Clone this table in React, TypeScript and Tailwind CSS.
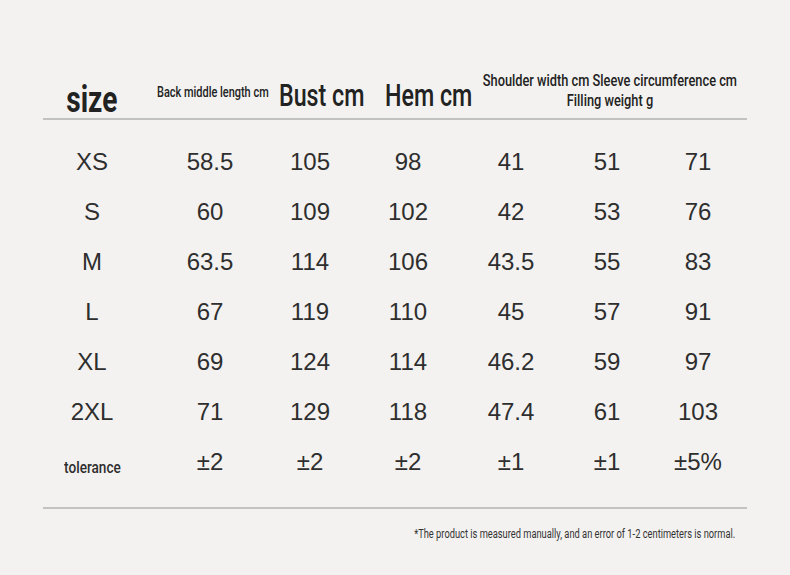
import React from "react";

const cond = { fontFamily: 'Roboto, "Liberation Sans", sans-serif' };
const num = { fontFamily: '"Liberation Sans", Arial, sans-serif' };

const rows = [
  ["XS", "58.5", "105", "98", "41", "51", "71"],
  ["S", "60", "109", "102", "42", "53", "76"],
  ["M", "63.5", "114", "106", "43.5", "55", "83"],
  ["L", "67", "119", "110", "45", "57", "91"],
  ["XL", "69", "124", "114", "46.2", "59", "97"],
  ["2XL", "71", "129", "118", "47.4", "61", "103"],
];
const tol = ["±2", "±2", "±2", "±1", "±1", "±5%"];

export default function App() {
  return (
    <div className="w-[790px] h-[575px] bg-[#f3f2f0] pt-[70px] pl-[43px] text-[#222]">
      <div className="w-[704px]">
        {/* header */}
        <div className="flex items-end h-[50px] border-b-2 border-[#c2c2c0] whitespace-nowrap" style={cond}>
          <div className="w-[98px] flex justify-center">
            <span className="inline-block text-[36px] font-bold leading-none scale-x-[0.78]">size</span>
          </div>
          <div className="w-[138px] pl-[16px] pb-[14px]">
            <span className="inline-block text-[15px] font-medium leading-none scale-x-[0.73] origin-left">Back middle length cm</span>
          </div>
          <div className="w-[106px] pb-[5px]">
            <span className="inline-block text-[31px] font-medium leading-none scale-x-[0.75] origin-left">Bust cm</span>
          </div>
          <div className="w-[96px] pb-[5px]">
            <span className="inline-block text-[31px] font-medium leading-none scale-x-[0.75] origin-left">Hem cm</span>
          </div>
          <div className="w-[258px] flex flex-col items-center text-[16px] font-medium leading-[20px] pb-[7px]">
            <span className="inline-block scale-x-[0.8]">Shoulder width cm Sleeve circumference cm</span>
            <span className="inline-block scale-x-[0.8]">Filling weight g</span>
          </div>
        </div>
        {/* body */}
        <div className="pt-[17px]">
          {rows.map((r) => (
            <div key={r[0]} className="grid grid-cols-[98px_138px_62px_134px_72px_120px_62px] h-[50px] items-center text-center text-[24px] text-[#2e2e2e]" style={num}>
              {r.map((c, i) => (
                <div key={i}>{c}</div>
              ))}
            </div>
          ))}
          <div className="grid grid-cols-[98px_138px_62px_134px_72px_120px_62px] h-[50px] items-center text-center text-[#2e2e2e] whitespace-nowrap">
            <div className="pt-[12px]" style={cond}>
              <span className="inline-block text-[17px] font-medium scale-x-[0.8]">tolerance</span>
            </div>
            {tol.map((c, i) => (
              <div key={i} className="text-[24px]" style={num}>{c}</div>
            ))}
          </div>
        </div>
        <div className="mt-[20px] border-t-2 border-[#c2c2c0]" />
        <div className="pt-[16px] pr-[12px] flex justify-end whitespace-nowrap" style={cond}>
          <span className="inline-block text-[12px] text-[#333] scale-x-[0.775] origin-right">
            *The product is measured manually, and an error of 1-2 centimeters is normal.
          </span>
        </div>
      </div>
    </div>
  );
}
